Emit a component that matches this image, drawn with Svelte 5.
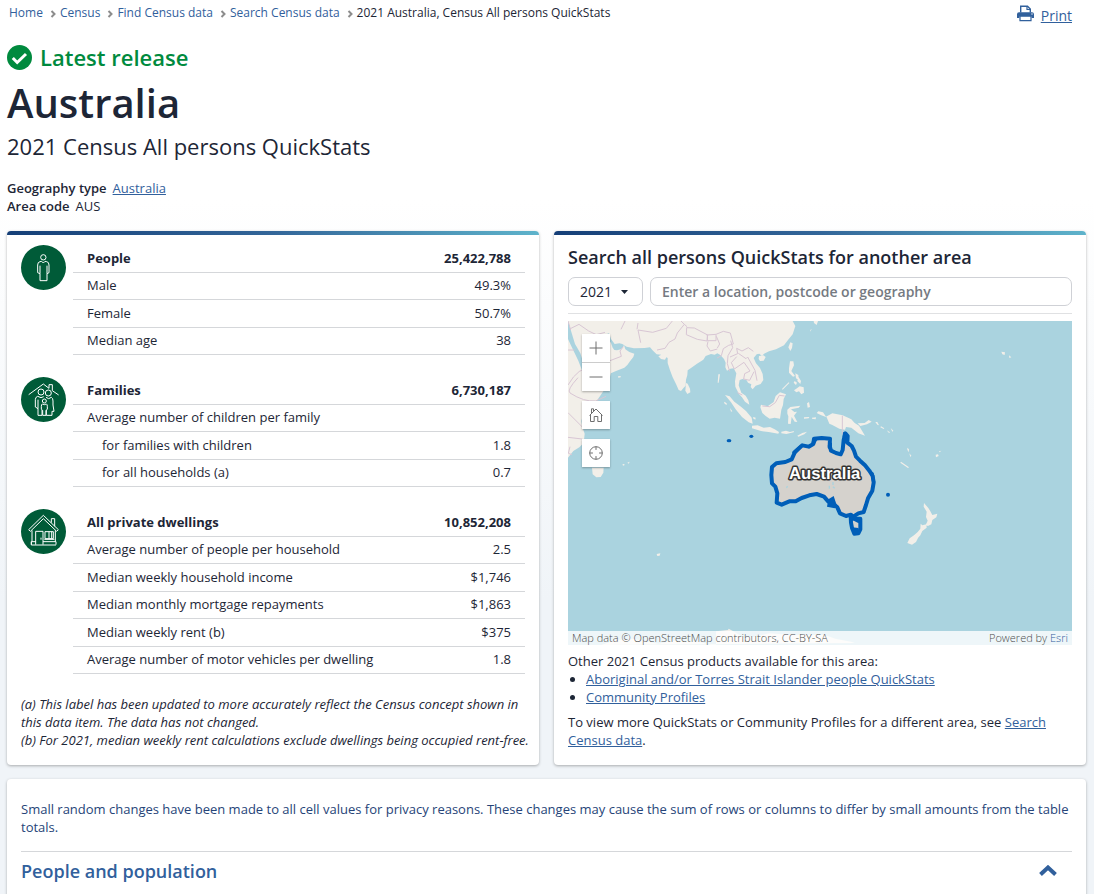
<script lang="ts">
	const crumbs = ['Home', 'Census', 'Find Census data', 'Search Census data'];

	type Row = { label: string; value?: string; indent?: boolean };

	const groups: { icon: string; rows: Row[] }[] = [
		{
			icon: 'person',
			rows: [
				{ label: 'People', value: '25,422,788' },
				{ label: 'Male', value: '49.3%' },
				{ label: 'Female', value: '50.7%' },
				{ label: 'Median age', value: '38' }
			]
		},
		{
			icon: 'family',
			rows: [
				{ label: 'Families', value: '6,730,187' },
				{ label: 'Average number of children per family' },
				{ label: 'for families with children', value: '1.8', indent: true },
				{ label: 'for all households (a)', value: '0.7', indent: true }
			]
		},
		{
			icon: 'house',
			rows: [
				{ label: 'All private dwellings', value: '10,852,208' },
				{ label: 'Average number of people per household', value: '2.5' },
				{ label: 'Median weekly household income', value: '$1,746' },
				{ label: 'Median monthly mortgage repayments', value: '$1,863' },
				{ label: 'Median weekly rent (b)', value: '$375' },
				{ label: 'Average number of motor vehicles per dwelling', value: '1.8' }
			]
		}
	];

	let year = $state('2021');
	let query = $state('');
	let open = $state(true);
</script>

<div class="page">
	<div class="topbar">
		<nav aria-label="Breadcrumb">
			<ol>
				{#each crumbs as crumb}
					<li>
						<a href="#top">{crumb}</a>
						<svg class="sep" viewBox="0 0 6 8" aria-hidden="true"><path d="M1.5 1 4.5 4 1.5 7" /></svg>
					</li>
				{/each}
				<li>2021 Australia, Census All persons QuickStats</li>
			</ol>
		</nav>
		<a class="print" href="#print">
			<svg viewBox="0 0 17 17" aria-hidden="true">
				<path d="M3.7 7.5V1.2h6.8l2.8 2.8v3.5" fill="#fff" stroke="#31609c" stroke-width="1.4" />
				<path d="M10 1v3.5h3.5" fill="none" stroke="#31609c" stroke-width="1.2" />
				<path d="M2 7.2h13q2 0 2 2V13h-2.4v-1.5H2.4V13H0V9.2q0-2 2-2z" fill="#31609c" />
				<path d="M3 11.2h11v4.5H3z" fill="#fff" stroke="#31609c" stroke-width="1.2" />
				<circle cx="15" cy="9" r=".7" fill="#fff" />
			</svg>
			<span>Print</span>
		</a>
	</div>

	<header>
		<p class="release">
			<svg viewBox="0 0 25 25" aria-hidden="true">
				<circle cx="12.5" cy="12.5" r="12.5" fill="#008a3e" />
				<path d="m5.8 13 4.4 4.5 8.8-8.5" fill="none" stroke="#fff" stroke-width="3" />
			</svg>
			Latest release
		</p>
		<h1>Australia</h1>
		<p class="subtitle">2021 Census All persons QuickStats</p>
		<dl>
			<div><dt>Geography type</dt><dd><a href="#geography">Australia</a></dd></div>
			<div><dt>Area code</dt><dd>AUS</dd></div>
		</dl>
	</header>

	<main>
		<section class="card accent summary">
			{#each groups as group}
				<div class="group">
					<svg class="badge" viewBox="0 0 135 135" aria-hidden="true">
						<circle cx="67.5" cy="67.5" r="67.5" fill="#005b38" />
						{#if group.icon === 'person'}
							<g class="line">
								<circle cx="67" cy="37" r="8" />
								<path d="M57 50q-7 1-7 10v23l7 3v21h21V86l6-3V60q0-9-7-10l-5-1-5 5-5-5zM57 62v24M78 62v24" />
							</g>
						{:else if group.icon === 'family'}
							<g class="line">
								<path d="M23 53 67 21l17 13V23h10v18l19 13" />
								<circle cx="60" cy="45" r="9" />
								<circle cx="82" cy="48" r="9" />
								<path d="M50 58q-7 2-7 10v22l8 5v20h12V99M51 68v27M50 58l10 4 8-3M75 61l8 4 8-4q5 2 5 11v12l3 19h-6v12H76V99" />
								<circle cx="70" cy="72" r="6" />
								<path d="M64 81q-3 1-3 7v9l4 3v15h10v-15l4-3v-9q0-6-3-7l-6 2z" />
							</g>
						{:else}
							<g class="line">
								<path d="M23 62 67 19l45 43-5 5-40-38-39 38zM91 41V29h10v23M33 64v34M103 64v34" />
								<path d="M31 107V98h14M66 98h39v9M31 98v10h74M44 107V67h22v40M60 86v6M72 68h25v21H72zM84 68v21M92 68v21M70 91h30" />
							</g>
						{/if}
					</svg>
					<table>
						<tbody>
							{#each group.rows as row, i}
								<tr class:head={i === 0}>
									<th scope="row" class:indent={row.indent}>{row.label}</th>
									<td>{row.value ?? ''}</td>
								</tr>
							{/each}
						</tbody>
					</table>
				</div>
			{/each}
			<p class="notes">
				(a) This label has been updated to more accurately reflect the Census concept shown in this data item. The data has not changed.<br />
				(b) For 2021, median weekly rent calculations exclude dwellings being occupied rent-free.
			</p>
		</section>

		<section class="card accent finder">
			<h2>Search all persons QuickStats for another area</h2>
			<form class="search" onsubmit={(e) => e.preventDefault()}>
				<div class="year">
					<select aria-label="Census year" bind:value={year}>
						<option>2021</option>
						<option>2016</option>
						<option>2011</option>
					</select>
					<svg viewBox="0 0 7 4" aria-hidden="true"><path d="M0 0h7L3.5 4z" /></svg>
				</div>
				<input type="text" aria-label="Location" placeholder="Enter a location, postcode or geography" bind:value={query} />
			</form>

			<div class="map">
				<!-- three map units to one CSS pixel -->
				<svg class="world" viewBox="24 18 1512 972" preserveAspectRatio="xMidYMid slice" role="img" aria-label="Map of Australia">
					<g class="land">
						<path
							d="M24 18H698l8 15-8 25-14 17-12 16-24 12-21 6-15 7-6 7-8-7-8 2-9 11 7 16 12 14 8 18 2 18-8 12-15 5-9 11-6-7 2-8-10-5-4-7-12-4-9 3-3 16 8 22 13 9 8 14 3 13-13-9-9-13-9-10-11-22-1-16 4-24-8-15-10 1-10 6-5-10 1-14-5-11-11-12-9-5-8 4-11-2-16 6-7 11-19 12-19 14-9 6-1 14-4 14-1 18-6 6-8 10-7-3-8-18-10-20-8-21-7-22 0-15-4-2-4 7-12-2-8-8 9-5-14-1-11-11-9-10-16 2-32 1-22-5-13-8-9-2-14 2-11-15-6-17-8 3 5 14 9 12 5 14 5 7 8 1 12-3 6-8 3-5 4 13 12 8 15 5-3 10-10 13-8 11-9 8-23 9-23 10-28 10-26 4-8-22-15-26-9-28-11-20-5-8z"
						/>
						<path
							d="M24 72l8 17 10 21 13 27 11 29 8 8 25-2 52-14 2 14-5 23-16 31-20 29-28 26-15 18-5 19 3 18 7 20-3 28-13 13-18 11-16 20-2 17 2 27-10 25-10 7z"
						/>
						<path d="M96 458h35l-1 15-8 13-13 1-11-9z" />
						<path d="m378 204 5 2 7 15 1 11-9 5-6-10z" />
						<path d="m597 123 13-2 7 5-6 11-11 1-4-6zM691 82l7 3-2 14-5 9-6-11z" />
					</g>
					<g class="land" transform="translate(390 0)">
						<path d="m105 240 14 4 14 16 18 14 17 14 17 20 3 18-12-4-20-16-18-22-15-22z" />
						<path d="m186 332 17-1 18 7 19-2 14 7 13 8-2 5-29-5-23-3-27-8zM274 350l14-3 12 4 12-3-1 4-22 5-15-2zM322 362l15-8 14-4-8 8-18 7z" />
						<path d="m213 269 20 5 18-13 6-18 13-11 18 6-7 14-2 18-5 14-4 27-16-3-15 3-12-8-10-9-6-17z" />
						<path d="m292 284 9-8 30-4-5 6-23 5 10 8 8-1-9 12 10 19-8-1-9-14-3 21-8-1 1-22-3-8z" />
						<path d="m351 265 6-4 3 15-7 2zM366 308l12-1-1 6-11-2zM385 289l14 3 9 13 19-10 31 6 26 12 10 11 13 8 18 30-20-7-21-17-16-2-3 8-17-3-21-11-9-4-8-19-18-7-12-6z" />
						<path d="m503 325 21-1 12-9 9 5-14 8-20 5z" />
						<path d="m300 139 10 0 2 12-8 17 11 15-6 2-12-12 0-13zM316 175l9 5 1 15-8-5zM325 185l8 13-2 9-9-9zM314 198l7 5-3 7-7-7zM321 220l8-6 12 3 1 16-8 5-7-9-8 3-7-6zM276 222l20-20 2 2-20 20z" />
						<path d="m371 18 13 0-4 12-8-6zM361 45l4-3-4 8zM556 321l6 0 5 10-5-2zM573 334l10 6-2 2-10-5zM590 346l10 6-3 2zM602 339l8 8-3 3zM652 398l5 5-1 9-4-8zM658 415l6 7-3 4zM633 440l24 17-3 2-23-16zM737 419l7-1 2 5-8 4zM747 409l7-2-5 5zM104 260l7 6-2 4-7-6zM120 279l7 10-4 1zM190 306l7 2-1 6-7-4zM342 307l16-1-2 4-14 1zM85 178l5 0-4 25-3 0z" />
					</g>
					<g class="land">
						<path d="M174 184l8-1 0 4-7 1zM189 447l5 1-2 4-5-2zM202 443l7-3-3 6zM290 717l11-2-2 7-7 1zM1324 110l11 2-1 8-7-2zM1347 121l7 6-6 2z" />
						<path transform="translate(570 315)" d="m522 249 13 15 6 10 6 11 15-4-3 11-12 8-3 13-10 5-7-3 6-13-5-11 2-16-9-15zM512 311l5 5 12-3 1 10-13 10-6 13-7 8-6 12-12 8-14-5 7-14 13-9 11-10 8-10z" />
						<path d="M124 990l39-14 56-5 77 15 36-9 87 3 49 15 0-46 36-4 2-4 14 8 31 19 35-3 42-10 64 5 103 0 31 11 47 9 11 4z" />
					</g>
					<g class="borders">
						<path d="M24 105h20M24 210q32-56 70-50M54 188q-35 38-24 46 42 27 77 24l31-14M24 293l43 43M24 367l43 5M30 395l-5 20 11 4M31 41l26-13 29 20 23 11 26-7M24 18l8 27M150 137l34-13-4-16 10-13M183 43l12-25" />
						<path d="M231 43l3-19M234 45l8 38M234 45l44 7 41-12 18-22M363 18l10 10-21 26-7 18-18 10-12 18-24 5M373 28l8 7" />
						<path d="m380 38 23 1 40 21-2 18-29-5-33-14zM440 60l28-2 22-9 21 5 9 33-14 4-16 10-6 21-13 7M442 60v17h26V59M444 79l-3 14 10 15 21-6M469 64l10 23-7 12M512 77l6 21-14 24-2 24 7 23M510 126l23-10-3-16 16 8 19-10 15 11M535 115l23 16 5-5 22 40 6 31M530 125l-16 18 9 19 29-20 18 26-16 8-3 16 18 4 13-26M532 233l15 7M607 273l22 2 17-12 12-22 16 2" />
						<path d="M847 302v56" />
					</g>
					<g transform="translate(570 315)">
						<path
							class="country"
							d="M66 141 79 130 106 126 125 118 135 96 157 76 176 80 190 72 192 56 215 54 240 56 239 78 243 92 258 99 272 103 278 90 281 60 286 40 293 48 292 68 305 78 312 92 318 110 330 122 345 136 358 152 368 168 371 188 367 212 354 235 348 255 341 276 325 280 310 290 303 284 288 288 270 280 262 262 248 250 235 245 222 230 200 222 178 226 155 234 137 244 118 244 95 254 80 248 82 220 76 200 66 190 64 165z"
						/>
						<path class="country" d="m302 289 8 7 21 0 0 32-6 12-12 1-7-17-3-16z" />
						<path class="gulf" d="m235 238 16-10 10 30-7 7-23-5zM126 96l23-20 5 8-22 24zM188 56l14 3-8 15-10-5zM235 62l11 7 0 25-13-10zM279 36l16 8-3 8-14 0zM357 151l14 7 5 28-8 8-5-24zM302 292l28 6-4 12-12-6zM306 322l20 2-2 18-12 0z" />
						<path class="lake" d="M249 186v9M238 197v9M254 205l-5-5M109 203l4-4" />
						<circle class="dot" cx="414" cy="224" r="6" />
						<text x="224" y="176">Australia</text>
					</g>
					<ellipse class="dot" cx="507" cy="377" rx="7" ry="5" />
					<ellipse class="dot" cx="574" cy="364" rx="6" ry="5" />
				</svg>
				<div class="tools">
					<div class="zoom">
						<button type="button" aria-label="Zoom in"><svg viewBox="0 0 14 14"><path d="M7 .5v13M.5 7h13" /></svg></button>
						<button type="button" aria-label="Zoom out"><svg viewBox="0 0 14 14"><path d="M.5 7h13" /></svg></button>
					</div>
					<button type="button" aria-label="Default map view">
						<svg viewBox="0 0 14 14"><path d="M.5 7.5 7 1l6.5 6.5M1.5 6.7v6.8h3.7v-5h3.6v5h3.7V6.7M2.5 5V.8h2V3" /></svg>
					</button>
					<button type="button" aria-label="Find my location">
						<svg viewBox="0 0 14 14"><circle cx="7" cy="7" r="6.3" /><path d="M7 .7v3.2M7 10.1v3.2M.7 7h3.2M10.1 7h3.2" /></svg>
					</button>
				</div>
				<div class="credit">
					<span>Map data © OpenStreetMap contributors, CC-BY-SA</span>
					<span>Powered by <a href="#esri">Esri</a></span>
				</div>
			</div>

			<p>Other 2021 Census products available for this area:</p>
			<ul>
				<li><a href="#atsi">Aboriginal and/or Torres Strait Islander people QuickStats</a></li>
				<li><a href="#profiles">Community Profiles</a></li>
			</ul>
			<p>To view more QuickStats or Community Profiles for a different area, see <a href="#search">Search Census data</a>.</p>
		</section>

		<section class="card details">
			<p>Small random changes have been made to all cell values for privacy reasons. These changes may cause the sum of rows or columns to differ by small amounts from the table totals.</p>
			<h2>
				<button type="button" aria-expanded={open} onclick={() => (open = !open)}>
					People and population
					<svg class:closed={!open} viewBox="0 0 18 12" aria-hidden="true"><path d="m1.5 9.5 7.5-7 7.5 7" /></svg>
				</button>
			</h2>
		</section>
	</main>
</div>

<style>
	:global(body) {
		margin: 0;
		background: #f0f4f8;
	}

	.page {
		height: 100vh;
		overflow: hidden;
		background: linear-gradient(#fff 200px, #f0f4f8 600px);
		color: #1d2636;
		font-family: 'Open Sans', sans-serif;
		font-size: 13px;
		line-height: 18px;
	}

	h1,
	h2,
	p,
	dl,
	dd,
	ol,
	ul {
		margin: 0;
		padding: 0;
	}

	a {
		color: #31609c;
	}

	.topbar {
		display: flex;
		justify-content: space-between;
		align-items: flex-start;
		padding: 4px 22px 0 9px;
	}

	ol {
		display: flex;
		list-style: none;
		font-size: 12px;
	}

	ol li {
		display: flex;
		align-items: center;
	}

	ol a {
		text-decoration: none;
	}

	.sep {
		width: 6px;
		height: 8px;
		margin: 2px 4px 0 7px;
		fill: none;
		stroke: #8c8c8c;
		stroke-width: 2;
	}

	.print {
		display: flex;
		gap: 7px;
		font-size: 14px;
		line-height: 24px;
		text-decoration: none;
	}

	.print span {
		text-decoration: underline;
	}

	.print svg {
		width: 17px;
		height: 17px;
		margin-top: 1px;
	}

	header {
		padding: 15px 7px 0;
	}

	.release {
		display: flex;
		align-items: center;
		gap: 8px;
		color: #008a3e;
		font-size: 22px;
		font-weight: 600;
		line-height: 28px;
	}

	.release svg {
		width: 25px;
		height: 25px;
	}

	h1 {
		margin-top: 5px;
		font-size: 40px;
		font-weight: 600;
		line-height: 54px;
	}

	.subtitle {
		margin-top: 1px;
		font-size: 22px;
		line-height: 30px;
	}

	dl {
		margin-top: 18px;
	}

	dl div {
		display: flex;
		gap: 6px;
	}

	dt {
		font-weight: 600;
	}

	main {
		display: grid;
		grid-template-columns: 1fr 1fr;
		gap: 14px 15px;
		padding: 16px 8px 0 7px;
	}

	.card {
		padding: 0 14px;
		border-radius: 4px;
		background: #fff;
		box-shadow: 0 1px 3px rgb(0 0 0 / 30%);
		overflow: hidden;
	}

	.accent::before {
		content: '';
		display: block;
		height: 4px;
		margin: 0 -14px;
		background: linear-gradient(90deg, #153f77, #336699 50%, #5eb3cb);
	}

	.group {
		display: flex;
		align-items: flex-start;
		gap: 7px;
		margin: 10px 0 22px;
	}

	.badge {
		flex: none;
		width: 45px;
		height: 45px;
	}

	.line {
		fill: none;
		stroke: #fff;
		stroke-width: 3;
	}

	table {
		flex: 1;
		border-spacing: 0;
	}

	th,
	td {
		padding: 3px 14px 5px;
		border-bottom: 1px solid #d5d7da;
		font-weight: 400;
		text-align: left;
	}

	tr:nth-child(odd) > * {
		padding-top: 4px;
	}

	td {
		text-align: right;
	}

	.head > * {
		font-weight: 700;
	}

	.indent {
		padding-left: 29px;
	}

	.notes {
		margin: -1px -8px 0 0;
		padding-bottom: 16px;
		font-style: italic;
	}

	.finder h2 {
		margin-top: 10px;
		font-size: 18px;
		font-weight: 600;
		line-height: 24px;
	}

	.search {
		display: flex;
		gap: 7px;
		margin-top: 8px;
		padding-bottom: 7px;
		border-bottom: 1px solid #e0e1e3;
	}

	.year {
		position: relative;
		flex: none;
		width: 75px;
	}

	.year svg {
		position: absolute;
		top: 13px;
		right: 15px;
		width: 7px;
		height: 4px;
		fill: #1d2636;
		pointer-events: none;
	}

	select,
	input {
		box-sizing: border-box;
		width: 100%;
		height: 29px;
		padding: 0 11px;
		border: 1px solid #cfd1d6;
		border-radius: 7px;
		background: #fff;
		color: inherit;
		font: inherit;
		font-size: 14px;
		appearance: none;
	}

	input {
		font-weight: 600;
	}

	input::placeholder {
		color: #757a82;
	}

	.map {
		position: relative;
		height: 324px;
		margin: 7px 0;
		background: #aad3df;
		overflow: hidden;
	}

	.world {
		display: block;
		width: 100%;
		height: 100%;
	}

	.land {
		fill: #f2efe9;
	}

	.borders {
		fill: none;
		stroke: #d8c6d4;
		stroke-width: 3;
	}

	.country {
		fill: #d5d2cd;
		stroke: #005eb8;
		stroke-width: 12;
		stroke-linejoin: round;
	}

	.gulf,
	.dot {
		fill: #005eb8;
	}

	.lake {
		fill: none;
		stroke: #aad3df;
		stroke-width: 4;
	}

	.world text {
		fill: #fff;
		stroke: #333;
		stroke-width: 9;
		stroke-linejoin: round;
		paint-order: stroke;
		font-family: 'Liberation Sans', sans-serif;
		font-size: 50px;
		font-weight: 700;
		text-anchor: middle;
	}

	.tools {
		position: absolute;
		top: 13px;
		left: 14px;
		display: grid;
		gap: 10px;
	}

	.zoom {
		display: grid;
		gap: 1px;
		background: #ccc;
		box-shadow: 0 1px 2px rgb(0 0 0 / 30%);
	}

	.tools button {
		display: grid;
		place-items: center;
		width: 28px;
		height: 28px;
		padding: 0;
		border: 0;
		background: #fff;
		box-shadow: 0 1px 2px rgb(0 0 0 / 30%);
		cursor: pointer;
	}

	.zoom button {
		box-shadow: none;
	}

	.tools svg {
		width: 14px;
		height: 14px;
		fill: none;
		stroke: #6e6e6e;
	}

	.credit {
		position: absolute;
		inset: auto 0 0;
		display: flex;
		justify-content: space-between;
		padding: 0 4px;
		background: rgb(255 255 255 / 80%);
		color: #4c4c4c;
		font-size: 11px;
		font-weight: 300;
		line-height: 14px;
	}

	.credit a {
		text-decoration: none;
	}

	ul {
		margin-bottom: 7px;
		padding-left: 18px;
	}

	.details {
		grid-column: 1 / -1;
		padding-top: 21px;
		color: #264478;
	}

	.details h2 {
		margin-top: 15px;
		border-top: 1px solid #d5d7da;
	}

	.details button {
		display: flex;
		justify-content: space-between;
		align-items: center;
		width: 100%;
		padding: 7px 15px 40px 0;
		border: 0;
		background: none;
		color: #31609c;
		font: inherit;
		font-size: 18px;
		font-weight: 600;
		line-height: 24px;
		cursor: pointer;
	}

	.details svg {
		width: 18px;
		height: 12px;
		fill: none;
		stroke: #31609c;
		stroke-width: 4;
	}

	.closed {
		transform: rotate(180deg);
	}
</style>
